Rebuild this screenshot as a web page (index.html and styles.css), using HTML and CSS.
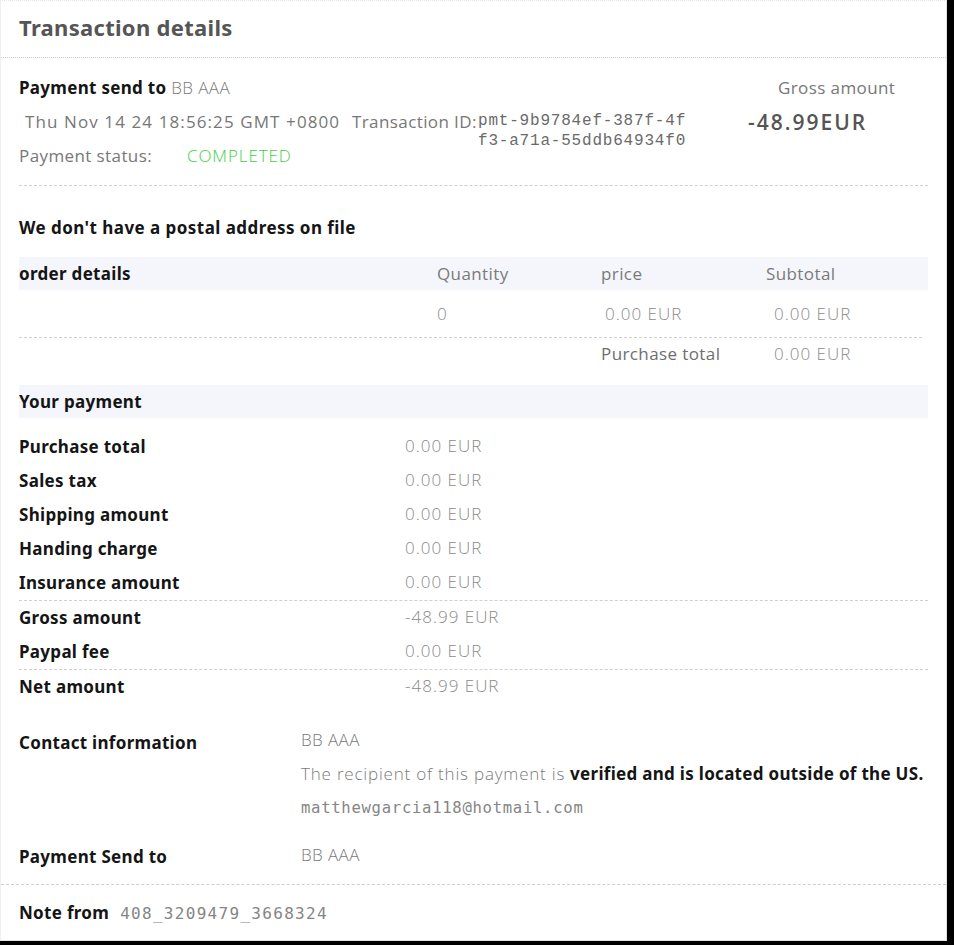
FILE: index.html
```html
<!DOCTYPE html>
<html lang="en">
<head>
<meta charset="utf-8">
<title>Transaction details</title>
<link rel="stylesheet" href="styles.css">
</head>
<body>
<div class="panel">
  <header class="title">Transaction details</header>

  <div class="content">
    <section class="summary">
      <div class="sendto"><b>Payment send to</b> <span class="grey">BB AAA</span></div>
      <div class="gross-label">Gross amount</div>
      <div class="date">Thu Nov 14 24 18:56:25 GMT +0800</div>
      <div class="txn-label">Transaction ID:</div>
      <div class="txn-id">pmt-9b9784ef-387f-4f<br>f3-a71a-55ddb64934f0</div>
      <div class="gross-value">-48.99EUR</div>
      <div class="status"><span class="status-label">Payment status:</span><span class="completed">COMPLETED</span></div>
    </section>

    <h2 class="postal">We don't have a postal address on file</h2>

    <div class="order-grid order-head">
      <b>order details</b>
      <span>Quantity</span>
      <span>price</span>
      <span>Subtotal</span>
    </div>
    <div class="order-grid order-row">
      <span></span>
      <span class="val">0</span>
      <span class="val val-price">0.00 EUR</span>
      <span class="val val-sub">0.00 EUR</span>
    </div>
    <div class="order-grid order-total">
      <span></span>
      <span></span>
      <span class="total-label">Purchase total</span>
      <span class="val val-sub">0.00 EUR</span>
    </div>

    <div class="pay-head"><b>Your payment</b></div>
    <div class="pay-list">
      <div class="pay-row"><b>Purchase total</b><span class="val">0.00 EUR</span></div>
      <div class="pay-row"><b>Sales tax</b><span class="val">0.00 EUR</span></div>
      <div class="pay-row"><b>Shipping amount</b><span class="val">0.00 EUR</span></div>
      <div class="pay-row"><b>Handing charge</b><span class="val">0.00 EUR</span></div>
      <div class="pay-row"><b>Insurance amount</b><span class="val">0.00 EUR</span></div>
      <div class="pay-row sep"><b>Gross amount</b><span class="val">-48.99 EUR</span></div>
      <div class="pay-row"><b>Paypal fee</b><span class="val">0.00 EUR</span></div>
      <div class="pay-row sep"><b>Net amount</b><span class="val">-48.99 EUR</span></div>
    </div>

    <div class="contact">
      <b class="contact-label">Contact information</b>
      <div class="contact-vals">
        <div class="cv grey">BB AAA</div>
        <div class="cv grey"><span class="recip">The recipient of this payment is</span> <b class="dark">verified and is located outside of the US.</b></div>
        <div class="cv mono-grey">matthewgarcia118@hotmail.com</div>
      </div>
      <b class="contact-label send-label">Payment Send to</b>
      <div class="cv grey send-val">BB AAA</div>
    </div>
  </div>

  <footer class="note">
    <b>Note from</b><span class="note-val">408_3209479_3668324</span>
  </footer>
</div>
</body>
</html>
```

FILE: styles.css
```css
html, body {
  margin: 0;
  padding: 0;
  background: #000;
}

body {
  font-family: "Open Sans", "Noto Sans", sans-serif;
  font-size: 17px;
  color: #777;
  letter-spacing: 0.4px;
}

b {
  font-family: "Noto Sans", "Open Sans", sans-serif;
  font-weight: 700;
  color: #151515;
  letter-spacing: 0.3px;
}

.panel {
  width: 947px;
  height: 941px;
  box-sizing: border-box;
  background: #fff;
  border: 1px solid #e3e3e3;
  border-left-color: #f0f0f0;
  border-top: 1px dotted #e6e6e6;
}

.title {
  height: 57px;
  box-sizing: border-box;
  border-bottom: 1px dotted #cfcfcf;
  padding-left: 18px;
  font-family: "Noto Sans", sans-serif;
  font-weight: 700;
  font-size: 22px;
  line-height: 53px;
  letter-spacing: 0.3px;
  color: #555;
}

.content {
  padding: 0 18px 11px 18px;
  border-bottom: 1px dashed #cfcfcf;
}

.grey {
  color: #7a7a7a;
  font-weight: 300;
}

.dark {
  color: #151515;
}

/* summary */
.summary {
  display: grid;
  grid-template-columns: 333px 126px 270px 1fr;
  grid-auto-rows: 34px;
  padding: 13px 0 12px;
  border-bottom: 1px dashed #cfcfcf;
  line-height: 34px;
}

.sendto {
  grid-column: 1 / 4;
  grid-row: 1;
}

.gross-label {
  grid-column: 4;
  grid-row: 1;
  padding-left: 30px;
  color: #777;
}

.date {
  grid-column: 1;
  grid-row: 2;
  padding-left: 6px;
  color: #777;
  letter-spacing: 1.1px;
  white-space: nowrap;
}

.txn-label {
  grid-column: 2;
  grid-row: 2;
  color: #777;
}

.txn-id {
  grid-column: 3;
  grid-row: 2 / 4;
  padding-top: 6px;
  font-family: "Liberation Mono", monospace;
  font-size: 16px;
  line-height: 20px;
  color: #6a6a6a;
  letter-spacing: 0.8px;
}

.gross-value {
  grid-column: 4;
  grid-row: 2;
  font-size: 21px;
  font-weight: 600;
  color: #555;
  letter-spacing: 2px;
}

.status {
  grid-column: 1 / 3;
  grid-row: 3;
  display: flex;
}

.status-label {
  width: 168px;
  color: #777;
}

.completed {
  color: #3fd03f;
  font-weight: 300;
  letter-spacing: 0.9px;
}

/* postal */
.postal {
  margin: 0 0 12px;
  padding-top: 25px;
  font-family: "Noto Sans", sans-serif;
  font-size: 17px;
  font-weight: 700;
  line-height: 34px;
  letter-spacing: 0.45px;
  color: #151515;
}

/* order */
.order-grid {
  display: grid;
  grid-template-columns: 418px 164px 165px 1fr;
}

.order-head {
  height: 33px;
  line-height: 33px;
  background: #f4f6fb;
  color: #7a7a7a;
}

.order-row {
  height: 48px;
  box-sizing: border-box;
  line-height: 47px;
  border-bottom: 1px dashed #cfcfcf;
  margin-right: 6px;
}

.order-total {
  height: 34px;
  line-height: 32px;
}

.total-label {
  color: #6e6e6e;
}

.val {
  color: #8a8a8a;
  font-weight: 300;
  letter-spacing: 1px;
}

.val-price {
  padding-left: 4px;
}

.val-sub {
  padding-left: 8px;
}

/* payment */
.pay-head {
  margin-top: 13px;
  height: 33px;
  line-height: 33px;
  background: #f4f6fb;
}

.pay-list {
  padding-top: 12px;
}

.pay-row {
  display: grid;
  grid-template-columns: 386px 1fr;
  height: 34px;
  line-height: 34px;
}

.pay-row .val {
  line-height: 32px;
}

.pay-row.sep {
  height: 35px;
  box-sizing: border-box;
  border-top: 1px dashed #cfcfcf;
}

/* contact */
.contact {
  display: grid;
  grid-template-columns: 282px 1fr;
  margin-top: 20px;
  line-height: 34px;
}

.contact-label {
  line-height: 38px;
}

.cv {
  height: 34px;
  line-height: 32px;
  white-space: nowrap;
}

.recip {
  letter-spacing: 0.8px;
}

.send-label,
.send-val {
  margin-top: 13px;
}

.send-label {
  line-height: 36px;
  height: 34px;
}

.mono-grey {
  font-family: "DejaVu Sans Mono", monospace;
  font-size: 15.6px;
  letter-spacing: 0.7px;
  color: #858585;
}

/* note */
.note {
  padding: 11px 18px 0;
  display: flex;
  align-items: baseline;
  line-height: 34px;
}

.note-val {
  margin-left: 11px;
  font-family: "DejaVu Sans Mono", monospace;
  font-size: 16px;
  letter-spacing: 1.3px;
  color: #858585;
}
```
